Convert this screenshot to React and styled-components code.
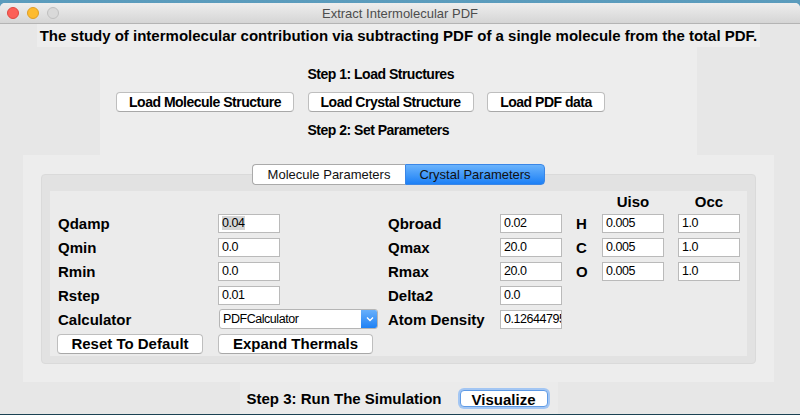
import React from 'react';
import styled, { createGlobalStyle } from 'styled-components';

const GlobalStyle = createGlobalStyle`
  html, body {
    margin: 0;
    padding: 0;
  }
  body {
    width: 800px;
    height: 415px;
    overflow: hidden;
    background: linear-gradient(180deg, #5b9cbd 0%, #2f6d8a 50%, #1b4253 100%);
    font-family: 'Liberation Sans', Arial, Helvetica, sans-serif;
    color: #000;
  }
`;

const Window = styled.div`
  margin-top: 3px;
  width: 800px;
  height: 411px;
  background: #e7e7e7;
  border-radius: 5px 5px 0 0;
  display: flex;
  flex-direction: column;
  overflow: hidden;
`;

const TitleBar = styled.div`
  flex: none;
  height: 20px;
  display: grid;
  grid-template-columns: 1fr auto 1fr;
  align-items: center;
  background: linear-gradient(#eeeeee, #d5d5d5);
  border-bottom: 1px solid #b4b4b4;
`;

const Lights = styled.div`
  display: flex;
  gap: 8px;
  padding-left: 7px;
`;

const Light = styled.span`
  width: 12px;
  height: 12px;
  box-sizing: border-box;
  border-radius: 50%;
  background: ${p => p.color};
  border: 1px solid ${p => p.edge};
`;

const Title = styled.div`
  font-size: 13px;
  color: #4d4d4d;
`;

const Content = styled.div`
  width: 797px;
  display: flex;
  flex-direction: column;
  align-items: center;
`;

const Headline = styled.div`
  height: 23px;
  padding: 0 3px;
  display: flex;
  align-items: center;
  background: #ededed;
  font-size: 15px;
  font-weight: 700;
`;

const StepPanel = styled.div`
  box-sizing: border-box;
  width: 597px;
  height: 108px;
  padding: 18px 0 0 16px;
  background: #ededed;
  display: grid;
  grid-template-columns: 178px 166px 118px;
  grid-template-rows: 18px 20px 18px;
  column-gap: 13.5px;
  row-gap: 9px;
`;

const StepLabel = styled.div`
  grid-column: 2;
  grid-row: ${p => p.row};
  font-size: 14px;
  letter-spacing: -0.5px;
  font-weight: 700;
  display: flex;
  align-items: center;
  white-space: nowrap;
`;

const PushButton = styled.button`
  box-sizing: border-box;
  width: ${p => p.w}px;
  height: 20px;
  margin: 0 0 0 ${p => p.shift || 0}px;
  padding: 0;
  background: #fff;
  border: 1px solid #bebebe;
  border-bottom-color: #a8a8a8;
  border-radius: 4px;
  font-family: inherit;
  font-size: 15px;
  font-weight: 700;
  color: #000;
  align-self: center;
`;

const LoadButton = styled(PushButton)`
  grid-column: ${p => p.col};
  grid-row: 2;
  font-size: 14px;
  letter-spacing: -0.5px;
`;

const ParamsPanel = styled.div`
  box-sizing: border-box;
  width: 751px;
  height: 227px;
  padding: 9px 18px 18px;
  background: #ededed;
`;

const TabWidget = styled.div`
  display: flex;
  flex-direction: column;
  align-items: center;
`;

const TabBar = styled.div`
  position: relative;
  z-index: 1;
  display: flex;
  height: 21px;
  margin-bottom: -11px;
`;

const Tab = styled.div`
  box-sizing: border-box;
  width: ${p => p.w}px;
  height: 21px;
  display: flex;
  align-items: center;
  justify-content: center;
  font-size: 13px;
  color: #111;
  border: 1px solid ${p => (p.active ? '#3a86e6' : '#aaaaaa')};
  border-radius: ${p => (p.first ? '4px 0 0 4px' : '0 4px 4px 0')};
  background: ${p => (p.active ? 'linear-gradient(#6ab3fc, #1c80f6)' : '#fff')};
  ${p => p.first && 'border-right: none;'}
`;

const Frame = styled.div`
  box-sizing: border-box;
  width: 715px;
  height: 190px;
  padding: 16px 8px 7px;
  background: #e2e2e2;
  border: 1px solid #dadada;
  border-radius: 4px;
`;

const Page = styled.div`
  box-sizing: border-box;
  height: 165px;
  padding: 0 8px;
  background: #ebebeb;
  display: grid;
  grid-template-columns: 160px 170px 112px 76px 26px 76px 62px;
  grid-template-rows: 20px repeat(5, 24px) 25px;
  align-items: center;
`;

const Label = styled.div`
  grid-column: ${p => p.col};
  grid-row: ${p => p.row};
  font-size: 15px;
  font-weight: 700;
  white-space: nowrap;
  text-align: ${p => (p.center ? 'center' : 'left')};
  width: ${p => (p.center ? '62px' : 'auto')};
`;

const Field = styled.div`
  grid-column: ${p => p.col};
  grid-row: ${p => p.row};
  box-sizing: border-box;
  width: 62px;
  height: 19px;
  padding: 0 3px;
  background: #fff;
  border: 1px solid #bababa;
  display: flex;
  align-items: center;
  overflow: hidden;
  white-space: nowrap;
  font-size: 12.5px;
  letter-spacing: -0.45px;
`;

const Selected = styled.span`
  background: #d5d5d5;
`;

const Combo = styled.div`
  grid-column: 2;
  grid-row: 6;
  box-sizing: border-box;
  width: 159px;
  height: 20px;
  margin-left: 1px;
  background: #fff;
  border: 1px solid #b5b5b5;
  border-radius: 3px;
  display: flex;
  align-items: center;
  font-size: 12.5px;
  letter-spacing: -0.45px;
  overflow: hidden;
`;

const ComboText = styled.span`
  flex: 1;
  padding-left: 3px;
`;

const ComboArrow = styled.span`
  width: 17px;
  align-self: stretch;
  margin: -1px -1px -1px 0;
  border-radius: 0 3px 3px 0;
  background: linear-gradient(#6cb2fb, #1b7ff5);
  display: flex;
  align-items: center;
  justify-content: center;
`;

const CellButton = styled(PushButton)`
  grid-column: ${p => p.col};
  grid-row: 7;
`;

const RunRow = styled.div`
  box-sizing: border-box;
  width: 318px;
  height: 32px;
  padding-left: 7px;
  display: flex;
  align-items: center;
  background: #ebebeb;
`;

const RunLabel = styled.div`
  font-size: 15px;
  font-weight: 700;
  white-space: nowrap;
`;

const FocusButton = styled.button`
  box-sizing: border-box;
  width: 88px;
  height: 17px;
  margin-left: 18px;
  padding: 0;
  background: #fff;
  border: 1px solid #5f9be6;
  border-radius: 4px;
  box-shadow: 0 0 0 2px #a3c6f3;
  font-family: inherit;
  font-size: 15px;
  font-weight: 700;
  color: #000;
`;

const leftRows = [
  ['Qdamp', '0.04'],
  ['Qmin', '0.0'],
  ['Rmin', '0.0'],
  ['Rstep', '0.01'],
];

const rightRows = [
  ['Qbroad', '0.02'],
  ['Qmax', '20.0'],
  ['Rmax', '20.0'],
  ['Delta2', '0.0'],
  ['Atom Density', '0.12644795919'],
];

const atoms = ['H', 'C', 'O'];

export default function App() {
  return (
    <>
      <GlobalStyle />
      <Window>
        <TitleBar>
          <Lights>
            <Light color="#fc5f57" edge="#de4740" />
            <Light color="#fdbb2e" edge="#de9e25" />
            <Light color="#d9d9d9" edge="#bfbfbf" />
          </Lights>
          <Title>Extract Intermolecular PDF</Title>
          <span />
        </TitleBar>
        <Content>
          <Headline>
            The study of intermolecular contribution via subtracting PDF of a single molecule from the total PDF.
          </Headline>
          <StepPanel>
            <StepLabel row={1}>Step 1: Load Structures</StepLabel>
            <LoadButton col={1} w={178}>Load Molecule Structure</LoadButton>
            <LoadButton col={2} w={166}>Load Crystal Structure</LoadButton>
            <LoadButton col={3} w={118}>Load PDF data</LoadButton>
            <StepLabel row={3}>Step 2: Set Parameters</StepLabel>
          </StepPanel>
          <ParamsPanel>
            <TabWidget>
              <TabBar>
                <Tab first w={153}>Molecule Parameters</Tab>
                <Tab active w={140}>Crystal Parameters</Tab>
              </TabBar>
              <Frame>
                <Page>
                  <Label col={6} row={1} center>Uiso</Label>
                  <Label col={7} row={1} center>Occ</Label>
                  {leftRows.map(([name, value], i) => (
                    <React.Fragment key={name}>
                      <Label col={1} row={i + 2}>{name}</Label>
                      <Field col={2} row={i + 2}>
                        {i === 0 ? <Selected>{value}</Selected> : value}
                      </Field>
                    </React.Fragment>
                  ))}
                  <Label col={1} row={6}>Calculator</Label>
                  <Combo>
                    <ComboText>PDFCalculator</ComboText>
                    <ComboArrow>
                      <svg width="8" height="6" viewBox="0 0 8 6">
                        <path d="M1 1.5 L4 4.5 L7 1.5" fill="none" stroke="#fff" strokeWidth="1.4" />
                      </svg>
                    </ComboArrow>
                  </Combo>
                  {rightRows.map(([name, value], i) => (
                    <React.Fragment key={name}>
                      <Label col={3} row={i + 2}>{name}</Label>
                      <Field col={4} row={i + 2}>{value}</Field>
                    </React.Fragment>
                  ))}
                  {atoms.map((atom, i) => (
                    <React.Fragment key={atom}>
                      <Label col={5} row={i + 2}>{atom}</Label>
                      <Field col={6} row={i + 2}>0.005</Field>
                      <Field col={7} row={i + 2}>1.0</Field>
                    </React.Fragment>
                  ))}
                  <CellButton col={1} w={146} shift={-1}>Reset To Default</CellButton>
                  <CellButton col={2} w={155}>Expand Thermals</CellButton>
                </Page>
              </Frame>
            </TabWidget>
          </ParamsPanel>
          <RunRow>
            <RunLabel>Step 3: Run The Simulation</RunLabel>
            <FocusButton>Visualize</FocusButton>
          </RunRow>
        </Content>
      </Window>
    </>
  );
}
